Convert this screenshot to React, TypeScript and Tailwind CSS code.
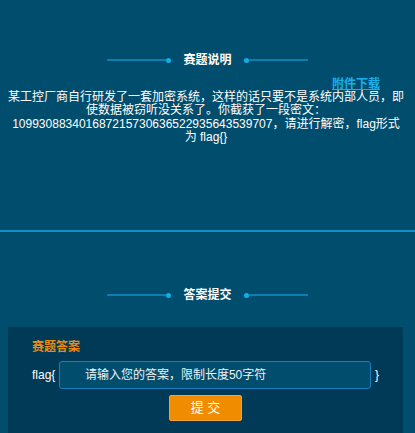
const font = { fontFamily: '"Liberation Sans", "Noto Sans CJK SC", sans-serif' };

function SectionTitle({ title }: { title: string }) {
  return (
    <div className="flex h-[20px] items-center justify-center">
      <div className="h-[2px] w-[59px] bg-[#0b7fb0]" />
      <div className="h-[5px] w-[5px] rounded-full bg-[#12aeea]" />
      <span className="mx-[12px] text-[12px] font-bold leading-[20px] text-white">{title}</span>
      <div className="h-[5px] w-[5px] rounded-full bg-[#12aeea]" />
      <div className="h-[2px] w-[59px] bg-[#0b7fb0]" />
    </div>
  );
}

export default function App() {
  return (
    <div className="min-h-[433px] w-full overflow-hidden bg-[#014d6d] text-white" style={font}>
      {/* 赛题说明 */}
      <div className="h-[230px] pt-[50px]">
        <SectionTitle title="赛题说明" />
        <div className="mt-[8px] flex h-[13px] justify-end pr-[35px]">
          <a href="#" className="text-[12px] font-bold leading-[12px] text-[#1ab0ea] underline">
            附件下载
          </a>
        </div>
        <p className="ml-[8px] w-[396px] text-center text-[12px] leading-[13.4px]">
          某工控厂商自行研发了一套加密系统，这样的话只要不是系统内部人员，即使数据被窃听没关系了。你截获了一段密文：109930883401687215730636522935643539707，请进行解密，flag形式为 flag{'{}'}
        </p>
      </div>

      <div className="h-[2px] w-full bg-[#1590c6]" />

      {/* 答案提交 */}
      <div className="mt-[53px]">
        <SectionTitle title="答案提交" />
      </div>

      <div className="mx-[8px] mt-[22px] w-[395px] bg-[#003a56] px-[24px] pt-[13px] pb-[20px]">
        <div className="text-[12px] font-bold leading-[14px] text-[#ef8a0e]">赛题答案</div>
        <div className="mt-[7px] flex items-center">
          <span className="w-[27px] text-[12px]">flag{'{'}</span>
          <input
            className="h-[28px] w-[313px] rounded-[3px] border border-[#1a7dbd] bg-[#014d6d] pl-[25px] text-[12px] text-white outline-none placeholder:text-[#eef3f6]"
            placeholder="请输入您的答案，限制长度50字符"
            style={font}
          />
          <span className="ml-[4px] text-[12px]">{'}'}</span>
        </div>
        <div className="mt-[6px] flex justify-center">
          <button
            className="h-[26px] w-[73px] rounded-[2px] border border-[#f6a23a] bg-[#f08c00] text-[13px] leading-[24px] text-white"
            style={font}
          >
            提 交
          </button>
        </div>
      </div>
    </div>
  );
}
